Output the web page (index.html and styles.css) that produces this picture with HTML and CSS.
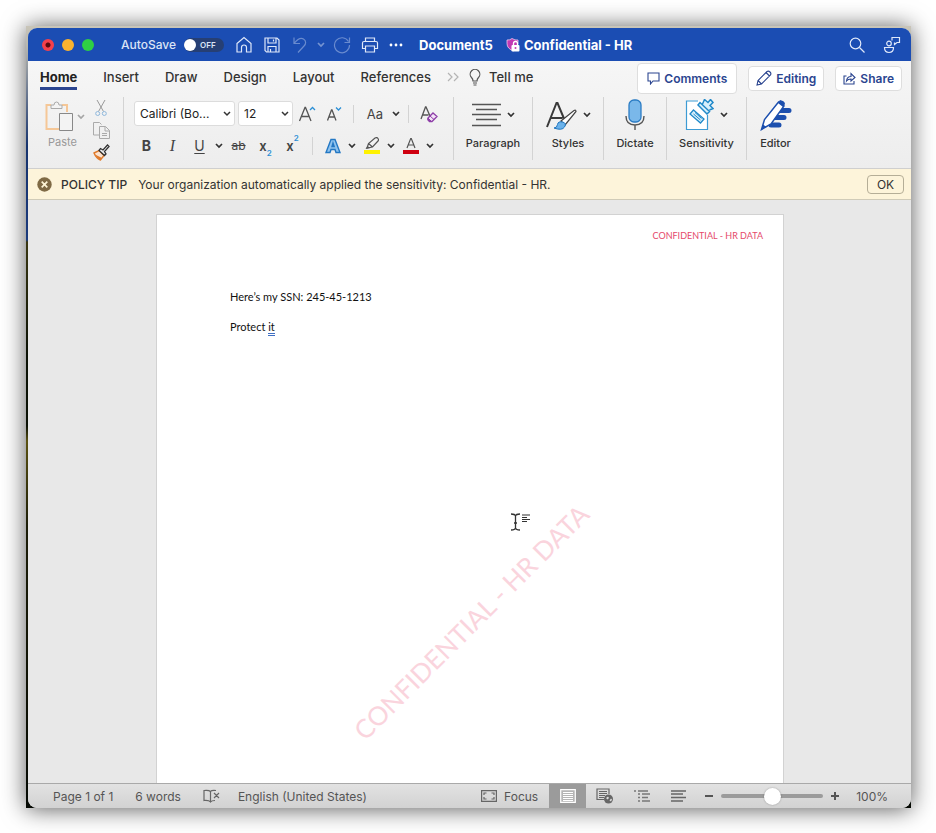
FILE: index.html
```html
<!DOCTYPE html>
<html lang="en">
<head>
    <meta charset="UTF-8">
    <meta name="viewport" content="width=device-width, initial-scale=1.0">
    <title>Document5</title>
    <link rel="stylesheet" href="styles.css">
</head>
<body>

<!-- Shared icons -->
<svg class="sprite" aria-hidden="true">
    <symbol id="chevron" viewBox="0 0 8 6"><path d="M1 1l3 3 3-3" fill="none" stroke="currentColor" stroke-width="1.7"/></symbol>
</svg>

<div class="desktop">
<div class="window">

    <header class="titlebar">
        <div class="lights">
            <button class="light red" aria-label="Close"></button>
            <button class="light yellow" aria-label="Minimize"></button>
            <button class="light green" aria-label="Zoom"></button>
        </div>
        <label class="autosave">AutoSave
            <input type="checkbox" class="autosave-input">
            <span class="switch"><span class="knob"></span>OFF</span>
        </label>
        <div class="quick">
            <button aria-label="Home"><svg width="18" height="18" viewBox="0 0 18 18"><path d="M2 7.500L9 1.500l7 6V16h-4.500v-4.500a2.500 2.500 0 0 0-5 0V16H2z"/></svg></button>
            <button aria-label="Save"><svg width="18" height="18" viewBox="0 0 18 18"><path d="M2 2h12l2 2v12H3.500L2 14.500zM5 2v5h8V2M5 16v-5.500h8V16M10.500 3.500v2M7.500 13v3"/></svg></button>
            <button class="dim" aria-label="Undo"><svg width="18" height="18" viewBox="0 0 18 18"><path d="M3 1.500v6h6M3 7.500C7 2.500 10 1.500 12.500 3c3 2 2.500 5 .5 7l-6 6.500"/></svg></button>
            <button class="dim caret" aria-label="Undo history"><svg width="8" height="6"><use href="#chevron"/></svg></button>
            <button class="dim" aria-label="Redo"><svg width="18" height="18" viewBox="0 0 18 18"><path d="M16.500 1.500v5h-5M15.500 5.500A7.500 7.500 0 1 0 16.500 9"/></svg></button>
            <button aria-label="Print"><svg width="18" height="18" viewBox="0 0 18 18"><path d="M4.500 5.500V2h9v3.500M4 12.500H1.500V7q0-1.500 1.500-1.500h12q1.500 0 1.500 1.500v5.500H14M4.500 10h9v6h-9z"/></svg></button>
            <button aria-label="More"><svg width="14" height="4" viewBox="0 0 14 4"><g class="solid"><circle cx="2" cy="2" r="1.400"/><circle cx="7" cy="2" r="1.400"/><circle cx="12" cy="2" r="1.400"/></g></svg></button>
        </div>
        <div class="doc-title">
            <span>Document5</span>
            <svg width="14" height="14" viewBox="0 0 14 14"><path d="M6 0.500q3 2 6 1.500v4L8 13Q1 11 1 5.500V2q3 .3 5-1.500z" fill="#c239b3" stroke="#f3c9ee" stroke-width=".8"/><rect x="5.500" y="7" width="8" height="6.500" rx="1" fill="#fff"/><path d="M7.500 7V5.500a2 2 0 0 1 4 0V7" fill="none" stroke="#fff" stroke-width="1.300"/><circle cx="9.500" cy="10" r="1" fill="#c239b3"/></svg>
            <span>Confidential - HR</span>
        </div>
        <div class="title-right">
            <button aria-label="Search"><svg width="16" height="16" viewBox="0 0 16 16"><circle cx="6.500" cy="6.500" r="5.300"/><path d="M10.500 10.500l5 5"/></svg></button>
            <button aria-label="Presence"><svg width="18" height="18" viewBox="0 0 18 18"><circle cx="6" cy="7.500" r="2.300"/><path d="M1.500 11.500h9q0 5-4.500 5t-4.500-5zM9 4.500v-3h7.500v5H14l-2.500 2v-2"/></svg></button>
        </div>
    </header>

    <div class="ribbon">
        <div class="tab-row">
            <nav class="tabs">
                <a href="#" class="active">Home</a>
                <a href="#">Insert</a>
                <a href="#">Draw</a>
                <a href="#">Design</a>
                <a href="#">Layout</a>
                <a href="#">References</a>
            </nav>
            <button class="more-tabs" aria-label="More tabs"><svg width="12" height="10" viewBox="0 0 12 10"><path d="M1 1l4 4-4 4M7 1l4 4-4 4" fill="none" stroke="#b4b4b4" stroke-width="1.200"/></svg></button>
            <button class="tell-me"><svg width="12" height="17" viewBox="0 0 12 17"><path d="M4 12q0-2-1.500-3.500a4.800 4.800 0 1 1 7 0Q8 10 8 12zM4 14h4M4.500 16h3" fill="none" stroke="#555" stroke-width="1.200"/></svg>Tell me</button>
            <div class="actions">
                <button class="action comments"><svg width="13" height="13" viewBox="0 0 13 13"><path d="M1 1h11v8H6l-2.500 3V9H1z"/></svg>Comments</button>
                <button class="action"><svg width="16" height="16" viewBox="0 0 16 16"><path d="M1 15l1-4.500L11 1.500q1.500-1 3 .5t.5 3L5.500 14zM2 10.500L5.500 14M10 2.500L13.500 6"/></svg>Editing</button>
                <button class="action"><svg width="13" height="13" viewBox="0 0 13 13"><path d="M3.500 4H1v8h10V9M3.500 9Q4 4.500 8 4.500V1.500L12 5.500l-4 3.500V7Q5 7 3.500 9z"/></svg>Share</button>
            </div>
        </div>

        <div class="tools">
            <div class="group clipboard">
                <div class="paste">
                    <button class="icon-line" aria-label="Paste">
                        <svg width="29" height="31" viewBox="0 0 29 31"><path d="M6 4H1.500v24H14M17 4h5v7" fill="none" stroke="#f5c797" stroke-width="2"/><path d="M6 7.500V4h3q0-3 2.500-3T14 4h3v3.500z" fill="#f3f3f3" stroke="#aaa"/><path d="M14.500 12.500h13v17h-13z" fill="#f3f3f3" stroke="#888"/></svg>
                        <svg class="faded" width="8" height="6"><use href="#chevron"/></svg>
                    </button>
                    <span class="paste-label">Paste</span>
                </div>
                <div class="clip-tools">
                    <button aria-label="Cut"><svg width="12" height="17" viewBox="0 0 12 17"><path d="M2 0l6.500 11.500M10 0L3.500 11.500" fill="none" stroke="#999"/><g fill="none" stroke="#8fb8dc"><circle cx="2.700" cy="13.500" r="2"/><circle cx="9.300" cy="13.500" r="2"/></g></svg></button>
                    <button aria-label="Copy"><svg width="17" height="17" viewBox="0 0 17 17"><path d="M6 13H.5V.5h6l2 2M6.500 4.500h6l4 4v8h-10zM12 4.500V9h4.500M9 11.500h5M9 13.500h5" fill="none" stroke="#aaa"/></svg></button>
                    <button aria-label="Format painter"><svg width="17" height="17" viewBox="0 0 17 17"><path d="M1 9l5-2.500 5 5L7.500 16Q3 14 1 9z" fill="#fbe3d0" stroke="#e07b2c" stroke-width="1.400"/><path d="M2 10.500l7 3.500-1.500 2Q4 14 2 10.500z" fill="#e07b2c"/><path d="M6 6.500l1.500-2L10 6l4.500-5L16 2.500 11.500 7.500l1.500 2.500-1.500 1.500z" fill="#eee" stroke="#333" stroke-width="1.300"/></svg></button>
                </div>
            </div>

            <div class="group font">
                <div class="font-row">
                    <select class="box family" aria-label="Font"><option>Calibri (Bo...</option></select>
                    <select class="box size" aria-label="Font size"><option>12</option></select>
                    <button class="fmt" aria-label="Grow font"><svg width="18" height="18" viewBox="0 0 18 18"><path d="M1.500 16L7 2.500h.5L13 16M3.500 11.500H11" fill="none" stroke="#555" stroke-width="1.300"/><path d="M12 5l2.500-2.500L17 5" fill="none" stroke="#2b8fd6" stroke-width="1.300"/></svg></button>
                    <button class="fmt" aria-label="Shrink font"><svg width="16" height="18" viewBox="0 0 16 18"><path d="M1.500 15.500L5.500 5H6l4 10.500M3 12h5.500" fill="none" stroke="#555" stroke-width="1.300"/><path d="M10 2.500L12.500 5 15 2.500" fill="none" stroke="#2b8fd6" stroke-width="1.300"/></svg></button>
                    <span class="divider"></span>
                    <button class="fmt case">Aa</button>
                    <button class="caret" aria-label="Case options"><svg width="8" height="6"><use href="#chevron"/></svg></button>
                    <span class="divider"></span>
                    <button class="fmt" aria-label="Clear formatting"><svg width="18" height="18" viewBox="0 0 18 18"><path d="M1 14L5.500 2H6l4 9M3 10h5.500" fill="none" stroke="#555" stroke-width="1.300"/><path d="M8 13l5-5 4 3.500-5 5H9.500L8 15z" fill="#f3e3f6" stroke="#8e3fa8" stroke-width="1.300"/><path d="M8 13l3.500 3.500H9.500L8 15zM10 11l4 3.500" fill="#8e3fa8" stroke="#8e3fa8"/></svg></button>
                </div>
                <div class="font-row">
                    <button class="fmt bold">B</button>
                    <button class="fmt italic">I</button>
                    <button class="fmt under">U</button>
                    <button class="caret" aria-label="Underline options"><svg width="8" height="6"><use href="#chevron"/></svg></button>
                    <button class="fmt strike">ab</button>
                    <button class="fmt script">x<sub>2</sub></button>
                    <button class="fmt script">x<sup>2</sup></button>
                    <span class="divider"></span>
                    <button class="fmt" aria-label="Text effects"><svg width="16" height="16" viewBox="0 0 16 16"><path d="M1 14.500L6 1.500h4l5 13h-4l-1-3H6l-1 3zM7 8.500h2.200L8 5z" fill="#8fc3ee" stroke="#2478c4" stroke-width="1.400"/></svg></button>
                    <button class="caret" aria-label="Text effect options"><svg width="8" height="6"><use href="#chevron"/></svg></button>
                    <button class="fmt" aria-label="Highlight"><svg width="16" height="18" viewBox="0 0 16 18"><path d="M3 11l1.500-4.500L11 1q2-1 3 .5t0 2.500L8.500 10zM4.500 6.500l4 3.500" fill="#f2f2f2" stroke="#555" stroke-width="1.200"/><path d="M1.500 12l2-3 3 2z" fill="#555"/><path d="M0 13h16v4H0z" fill="#fff200"/></svg></button>
                    <button class="caret" aria-label="Highlight colors"><svg width="8" height="6"><use href="#chevron"/></svg></button>
                    <button class="fmt" aria-label="Font color"><svg width="16" height="18" viewBox="0 0 16 18"><path d="M4 11L7.700 1.500h.6L12 11M5.500 8h5" fill="none" stroke="#555" stroke-width="1.200"/><path d="M0 13h16v4H0z" fill="#cf0010"/></svg></button>
                    <button class="caret" aria-label="Font colors"><svg width="8" height="6"><use href="#chevron"/></svg></button>
                </div>
            </div>

            <button class="group big paragraph">
                <span class="icon-line">
                    <svg width="29" height="32" viewBox="0 0 29 32"><path d="M0 5.500h29M4 10.500h21M0 15.500h29M4 20.500h21M0 26.500h29" stroke="#555" stroke-width="1.300"/></svg>
                    <svg width="8" height="6"><use href="#chevron"/></svg>
                </span>
                Paragraph
            </button>
            <button class="group big styles">
                <span class="icon-line">
                    <svg width="31" height="32" viewBox="0 0 31 32"><path d="M1 28L10.500 4h1L19 22M5 19h11.500" fill="none" stroke="#3a3a3a" stroke-width="2"/><path d="M15 22L28 11.500q2-1 2 1L19 26z" fill="#fff" stroke="#444" stroke-width="1.200"/><path d="M8 29q3 0 3.500-3.500t5-2.500 2 5T8 29z" fill="#6bb2ea" stroke="#1f74bd"/></svg>
                    <svg width="8" height="6"><use href="#chevron"/></svg>
                </span>
                Styles
            </button>
            <button class="group big dictate">
                <span class="icon-line">
                    <svg width="20" height="32" viewBox="0 0 20 32"><rect x="4" y="1" width="12" height="22" rx="5" fill="#7ab8ea" stroke="#2b7cc4" stroke-width="1.300"/><path d="M1 17q0 9 9 9t9-9M10 26v5" fill="none" stroke="#555" stroke-width="1.400"/></svg>
                </span>
                Dictate
            </button>
            <button class="group big sensitivity">
                <span class="icon-line">
                    <svg width="29" height="32" viewBox="0 0 29 32"><path d="M1 1.500h21v29H1z" fill="#fff"/><path d="M13 2H1.500v28.500h21V16" fill="none" stroke="#3d9bd4" stroke-width="1.200"/><path d="M8.500 11L19 20l-3.500 4L5 15z" fill="#d7effb" stroke="#2089c9" stroke-width="1.300"/><path d="M8.500 15l7 6M10 13.500l6.500 6" stroke="#2089c9"/><path d="M15 3.500l9.500 9L22 15l-9-9zM17.500 5l2-4.500 3.500 3 2.500-3 2.500 3-3 3 3 3-3.500 1.500" fill="#d7effb" stroke="#2089c9" stroke-width="1.500"/></svg>
                    <svg width="8" height="6"><use href="#chevron"/></svg>
                </span>
                Sensitivity
            </button>
            <button class="group big editor">
                <span class="icon-line">
                    <svg width="32" height="32" viewBox="0 0 32 32"><path d="M19 11.500h10M14 18.500h10M11 26h8" stroke="#1c4fae" stroke-width="5" stroke-linecap="round"/><path d="M1.500 30.500l3-10L18.500 3l5.500 4-13 18z" fill="#fff" stroke="#1c4fae" stroke-width="1.500"/><path d="M18 4l2-3q5 1 5 4l-2 3zM1.500 30.500l1.500-5 3.500 2.500z" fill="#1c4fae"/></svg>
                </span>
                Editor
            </button>
        </div>
    </div>

    <div class="policy">
        <svg width="15" height="15" viewBox="0 0 15 15"><circle cx="7.500" cy="7.500" r="7.200" fill="#7f6a45"/><path d="M4.700 4.700l5.600 5.600M10.300 4.700l-5.600 5.600" stroke="#fdf4d6" stroke-width="1.700"/></svg>
        <span class="policy-name">POLICY TIP</span>
        <span class="policy-text">Your organization automatically applied the sensitivity: Confidential - HR.</span>
        <button class="ok">OK</button>
    </div>

    <main class="canvas">
        <article class="page">
            <div class="page-header">CONFIDENTIAL - HR DATA</div>
            <p>Here’s my SSN: 245-45-1213</p>
            <p>Protect <span class="grammar">it</span></p>
            <div class="watermark">CONFIDENTIAL - HR DATA</div>
            <svg class="pointer" width="22" height="20" viewBox="0 0 22 20"><path d="M1 2q4 0 4.500 2Q6 2 10 2M5.500 3v13M1 18q4 0 4.500-2Q6 18 10 18M4 11h3" fill="none" stroke="#333" stroke-width="1.300"/><path d="M12 3h8M12 5.500h5M12 7.500h8M12 9.500h5" stroke="#333" stroke-width="1.200"/></svg>
        </article>
    </main>

    <footer class="status">
        <span class="pages">Page 1 of 1</span>
        <span class="words">6 words</span>
        <button class="proof" aria-label="Proofing"><svg width="17" height="14" viewBox="0 0 17 14"><path d="M7.500 2.500Q6 1 1 1.500v10q5-.5 6.500 1.500Q8.500 11.500 12 11.500M7.500 13V2.500Q8.500 1 13 1.500M11 4l5 5M16 4l-5 5" fill="none" stroke="#666" stroke-width="1.200"/></svg></button>
        <span class="language">English (United States)</span>
        <button class="focus"><svg width="16" height="12" viewBox="0 0 16 12"><path d="M.6.6h14.800v10.800H.6z" fill="none" stroke="#666" stroke-width="1.200"/><path d="M3 5V3h2.500M10.500 3H13v2M13 7v2h-2.500M5.500 9H3V7" fill="none" stroke="#666" stroke-width="1.200"/></svg>Focus</button>
        <div class="views">
            <button class="view on" aria-label="Print layout"><svg width="16" height="14" viewBox="0 0 16 14"><path d="M.7.700h14.600v12.600H.7z" fill="#b5b5b5" stroke="#fff" stroke-width="1.200"/><path d="M3 3.500h10M3 5.500h10M3 7.500h10M3 9.500h10M3 11.500h10" stroke="#fff"/></svg></button>
            <button class="view" aria-label="Web layout"><svg width="18" height="16" viewBox="0 0 18 16"><path d="M8 11.500H1V1h12v5M3 3.500h8M3 5.500h8M3 7.500h6M3 9.500h5" fill="none" stroke="#666" stroke-width="1.200"/><circle cx="12.500" cy="11" r="4.500" fill="#666"/><path d="M10 10l2-1.500 1 1.500-1.500 1.500zM13.500 12.500l1.500-2 1 1-1 2z" fill="#ddd"/></svg></button>
            <button class="view" aria-label="Outline"><svg width="16" height="12" viewBox="0 0 16 12"><path d="M0 1h2M4 1h10M4 4h2M8 4h8M4 7.500h2M8 7.500h6M4 11h2M8 11h8" stroke="#777" stroke-width="1.300"/></svg></button>
            <button class="view" aria-label="Draft"><svg width="15" height="12" viewBox="0 0 15 12"><path d="M0 1h15M0 4h12M0 7.500h15M0 11h12" stroke="#666" stroke-width="1.300"/></svg></button>
        </div>
        <div class="zoom">
            <button aria-label="Zoom out"><svg width="10" height="10" viewBox="0 0 10 10"><path d="M1 5h8" stroke="#555" stroke-width="2"/></svg></button>
            <input type="range" min="0" max="100" value="50" aria-label="Zoom">
            <button aria-label="Zoom in"><svg width="10" height="10" viewBox="0 0 10 10"><path d="M1 5h8M5 1v8" stroke="#555" stroke-width="2"/></svg></button>
        </div>
        <span class="percent">100%</span>
    </footer>

</div>
</div>

</body>
</html>
```
FILE: styles.css
```css
* {
    box-sizing: border-box;
}

body {
    margin: 0;
    padding: 26px 25px 25px 26px;
    height: 100vh;
    background: #fff;
    font-family: Inter, "Liberation Sans", sans-serif;
    font-size: 12px;
    color: #333;
}

button {
    display: flex;
    align-items: center;
    justify-content: center;
    padding: 0;
    border: none;
    background: none;
    color: inherit;
    font: inherit;
}

svg {
    flex: none;
}

.sprite {
    position: absolute;
    width: 0;
    height: 0;
}

.desktop {
    height: 100%;
    padding: 2px 0 0 2px;
    background: linear-gradient(#c9c5b8 0, #b7b7b0 20px, #17346e 120px, #1b3a7c 214px, #3a3712 216px, #0c1206 330px, #0c1206 400px, #5b5212 415px, #1c1d08 500px, #060a04 100%);
    box-shadow: 0 1px 22px rgba(0, 0, 0, 0.65);
}

.window {
    display: flex;
    flex-direction: column;
    height: 100%;
    border-radius: 9px;
    background: #e8e8e8;
    overflow: hidden;
}

/* Title bar */
.titlebar {
    display: flex;
    align-items: center;
    height: 33px;
    padding: 0 10px 0 14px;
    background: #1b4db3;
    color: #fff;
}

.lights {
    display: flex;
    gap: 8px;
}

.light {
    width: 12px;
    height: 12px;
    border-radius: 50%;
}

.red {
    background: radial-gradient(circle, #5c0a10 2px, #f5404c 3px);
}

.yellow {
    background: #fbb32f;
}

.green {
    background: #2fd044;
}

.autosave {
    display: flex;
    align-items: center;
    gap: 8px;
    margin-left: 27px;
    font-weight: 500;
    color: #dbe4f6;
}

.autosave-input {
    position: absolute;
    opacity: 0;
}

.switch {
    display: flex;
    align-items: center;
    gap: 4px;
    width: 40px;
    height: 14px;
    border-radius: 7px;
    background: #263f74;
    font-size: 8px;
    font-weight: 600;
}

.knob {
    width: 12px;
    height: 12px;
    border-radius: 50%;
    background: #fff;
}

.quick {
    display: flex;
    align-items: center;
    gap: 10px;
    margin-left: 11px;
}

.titlebar svg {
    fill: none;
    stroke: #dfe8fa;
    stroke-width: 1.2;
}

.titlebar .solid {
    fill: #fff;
    stroke: none;
}

.quick .dim {
    opacity: 0.4;
}

.quick .caret {
    margin-left: -4px;
    margin-right: -4px;
}

.doc-title {
    display: flex;
    align-items: center;
    margin-left: 16px;
    font-size: 13px;
    font-weight: 700;
}

.doc-title svg {
    margin: 0 4px 0 13px;
    stroke: none;
}

.title-right {
    display: flex;
    gap: 18px;
    margin-left: auto;
}

/* Ribbon */
.ribbon {
    height: 108px;
    border-bottom: 1px solid #cfcfcf;
    background: linear-gradient(#f6f6f6, #ededed);
}

.tab-row {
    display: flex;
    align-items: center;
    height: 32px;
    padding: 0 9px 0 12px;
    font-size: 13px;
    font-weight: 500;
}

.tabs {
    display: flex;
    gap: 26px;
}

.tabs a {
    padding: 4px 0 1px;
    border-bottom: 3px solid transparent;
    color: #333;
    line-height: 18px;
    text-decoration: none;
}

.tabs .active {
    border-color: #2b4590;
    color: #222;
    font-weight: 700;
}

.more-tabs {
    margin-left: 16px;
}

.tell-me {
    gap: 8px;
    margin-left: 10px;
}

.actions {
    display: flex;
    align-items: center;
    gap: 11px;
    margin-left: auto;
    padding-top: 2px;
}

.action {
    gap: 4px;
    height: 25px;
    padding: 0 7px;
    border: 1px solid #dedede;
    border-radius: 4px;
    background: #fff;
    color: #2b4590;
    font-size: 12px;
    font-weight: 600;
}

.action svg {
    fill: none;
    stroke: #2b4590;
    stroke-width: 1.1;
}

.comments {
    height: 31px;
    padding: 0 9px;
}

.tools {
    display: flex;
    height: 63px;
    margin-top: 4px;
}

.group {
    padding: 0;
}

.group + .group {
    border-left: 1px solid #d3d3d3;
}

.clipboard {
    display: flex;
    width: 95px;
    padding-left: 17px;
}

.icon-line {
    display: flex;
    align-items: center;
    gap: 6px;
}

.paste {
    padding-top: 4px;
    width: 46px;
}

.paste .icon-line {
    gap: 3px;
}

.paste-label {
    display: block;
    padding-left: 3px;
    margin-top: 3px;
    font-size: 11px;
    color: #999;
}

.faded {
    color: #a5a5a5;
}

.clip-tools {
    display: flex;
    flex-direction: column;
    align-items: center;
    gap: 5px;
    padding-top: 3px;
    width: 20px;
}

.font {
    display: flex;
    flex-direction: column;
    gap: 7px;
    width: 330px;
    padding: 4px 0 0 10px;
}

.font-row {
    display: flex;
    align-items: center;
    height: 25px;
}

.box {
    appearance: none;
    height: 25px;
    padding: 0 18px 0 5px;
    border: 1px solid #dcdcdc;
    border-radius: 3px;
    background: #fff url("data:image/svg+xml,%3Csvg xmlns='http://www.w3.org/2000/svg' width='8' height='6'%3E%3Cpath d='M1 1l3 3 3-3' fill='none' stroke='%23333' stroke-width='1.5'/%3E%3C/svg%3E") no-repeat right 3px center;
    color: #222;
    font: inherit;
}

.family {
    width: 101px;
    margin-right: 3px;
}

.size {
    width: 55px;
}

.fmt {
    width: 27px;
    height: 25px;
    font-size: 14px;
    color: #444;
}

.caret {
    width: 12px;
}

.divider {
    width: 1px;
    height: 18px;
    margin: 0 6px;
    background: #d3d3d3;
}

.case {
    width: 30px;
    font-size: 13px;
}

.bold {
    width: 25px;
    font-weight: 700;
}

.italic {
    font-family: "Liberation Serif", serif;
    font-size: 16px;
    font-style: italic;
}

.under {
    text-decoration: underline;
    text-underline-offset: 2px;
}

.strike {
    font-size: 12px;
    text-decoration: line-through;
}

.script {
    font-size: 13px;
    font-weight: 600;
}

.script sub,
.script sup {
    font-size: 8px;
    color: #2b8fd6;
}

.script sub {
    align-self: flex-end;
}

.script sup {
    align-self: flex-start;
}

.big {
    flex-direction: column;
    justify-content: flex-start;
    gap: 5px;
    padding-top: 2px;
    font-size: 11px;
    font-weight: 500;
}

.paragraph {
    width: 79px;
}

.styles {
    width: 71px;
}

.dictate {
    width: 63px;
}

.sensitivity {
    width: 80px;
}

.editor {
    width: 58px;
}

/* Policy tip */
.policy {
    display: flex;
    align-items: center;
    height: 31px;
    padding: 0 7px 0 9px;
    border-bottom: 1px solid #d0cbb8;
    background: #fdf4da;
}

.policy-name {
    margin-left: 9px;
    font-weight: 500;
}

.policy-text {
    margin-left: 11px;
}

.ok {
    width: 37px;
    height: 19px;
    margin-left: auto;
    border: 1px solid #b5ae97;
    border-radius: 4px;
}

/* Document */
.canvas {
    flex: 1;
    min-height: 0;
    padding: 14px 127px 0 128px;
    overflow: hidden;
}

.page {
    position: relative;
    height: 100%;
    padding: 15px 20px 0 73px;
    border: 1px solid #d2d2d2;
    border-bottom: none;
    background: #fff;
    font-family: Lato, sans-serif;
    font-size: 11px;
    color: #111;
}

.page-header {
    margin-bottom: 48px;
    font-size: 9px;
    line-height: 11px;
    text-align: right;
    color: #e5486a;
}

.page p {
    margin: 0 0 14px;
    line-height: 16px;
}

.grammar {
    border-bottom: 3px double #3f6fc4;
}

.watermark {
    position: absolute;
    top: 391px;
    left: 314px;
    font-size: 26px;
    line-height: 32px;
    white-space: nowrap;
    color: #fad4dd;
    transform: translateX(-50%) rotate(-45deg);
}

.pointer {
    position: absolute;
    top: 297px;
    left: 353px;
}

/* Status bar */
.status {
    display: flex;
    align-items: center;
    height: 25px;
    padding: 0 23px 0 25px;
    border-top: 1px solid #a9a9a9;
    background: linear-gradient(#e2e2e2, #d2d2d2);
    color: #555;
}

.words {
    margin-left: 22px;
}

.proof {
    margin-left: 22px;
}

.language {
    margin-left: 18px;
}

.focus {
    gap: 7px;
    margin-left: auto;
}

.views {
    display: flex;
    height: 100%;
    margin-left: 11px;
}

.view {
    width: 37px;
    height: 100%;
}

.on {
    background: #9b9b9b;
}

.zoom {
    display: flex;
    align-items: center;
    gap: 7px;
    margin-left: 7px;
}

.zoom input {
    appearance: none;
    width: 102px;
    height: 4px;
    margin: 0;
    border-radius: 2px;
    background: #9b9b9b;
}

.zoom input::-webkit-slider-thumb {
    appearance: none;
    width: 17px;
    height: 17px;
    border-radius: 50%;
    background: #fff;
    box-shadow: 0 0 2px rgba(0, 0, 0, 0.3);
}

.percent {
    margin-left: 16px;
}
```
